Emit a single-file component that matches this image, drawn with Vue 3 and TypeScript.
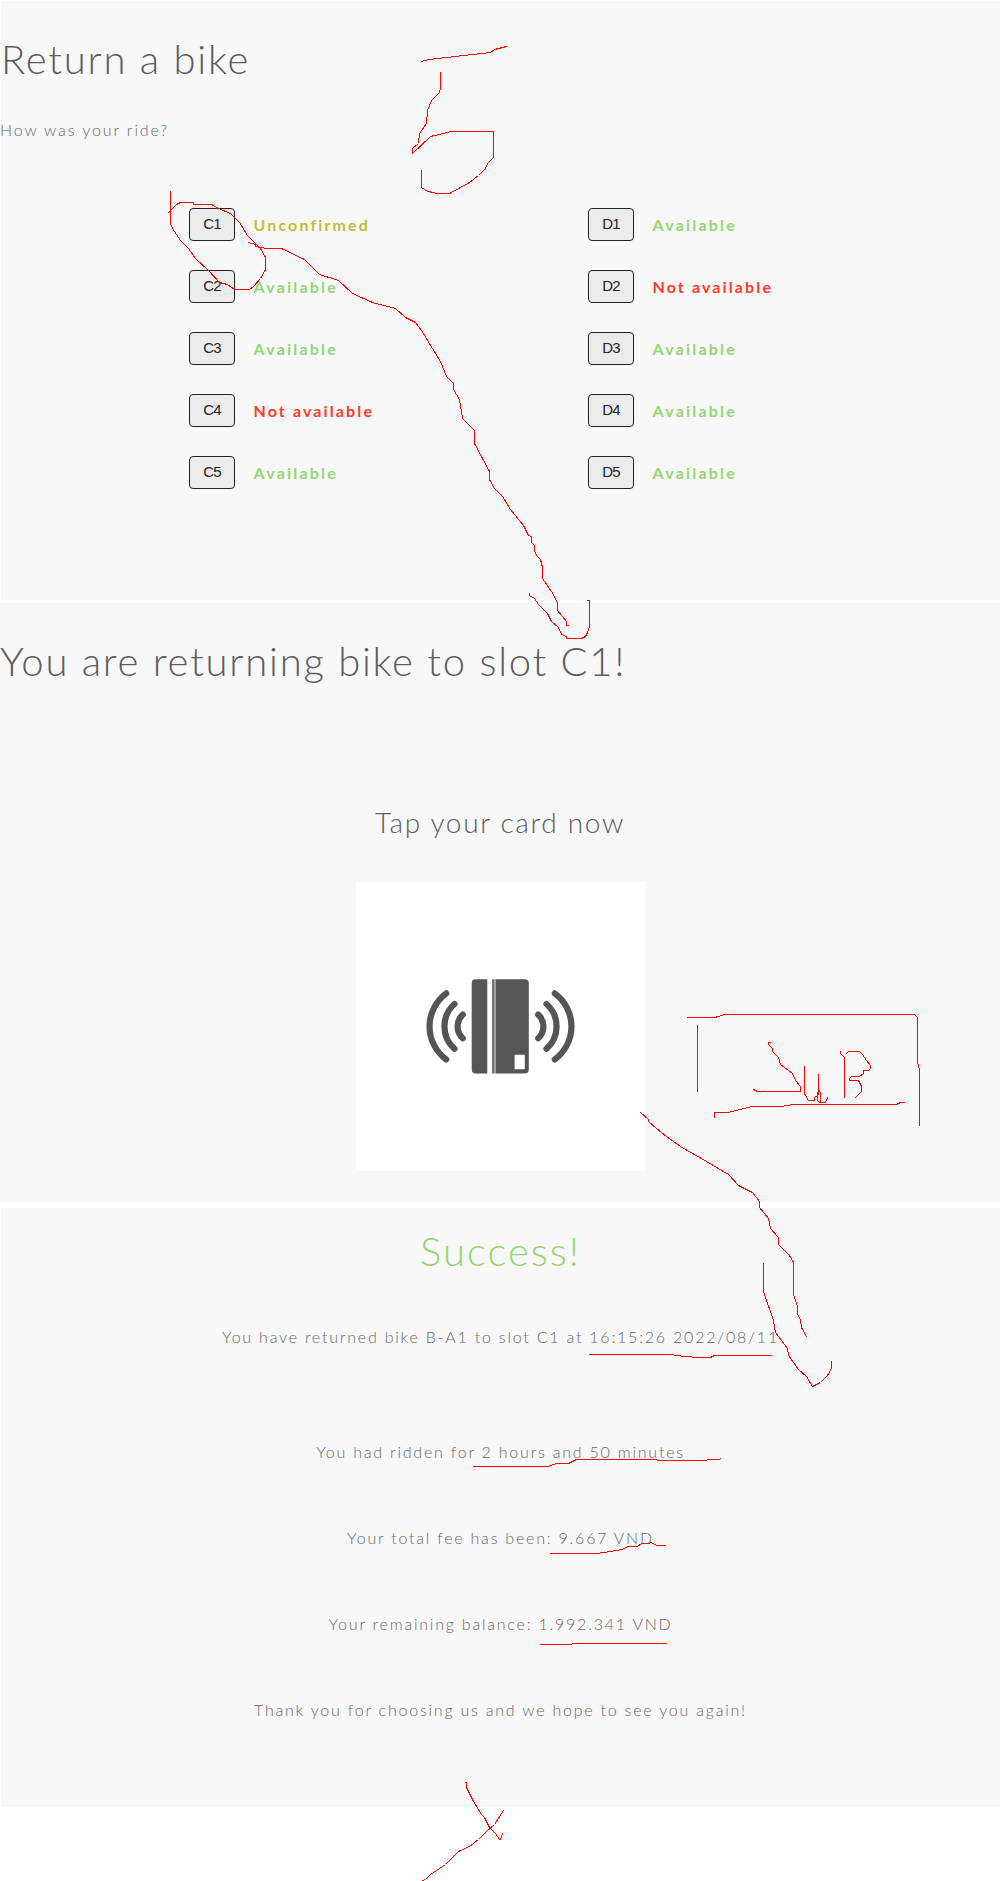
<script setup lang="ts">
type Status = 'Available' | 'Not available' | 'Unconfirmed'

interface Slot {
  id: string
  status: Status
}

const columns: Slot[][] = [
  [
    { id: 'C1', status: 'Unconfirmed' },
    { id: 'C2', status: 'Available' },
    { id: 'C3', status: 'Available' },
    { id: 'C4', status: 'Not available' },
    { id: 'C5', status: 'Available' },
  ],
  [
    { id: 'D1', status: 'Available' },
    { id: 'D2', status: 'Not available' },
    { id: 'D3', status: 'Available' },
    { id: 'D4', status: 'Available' },
    { id: 'D5', status: 'Available' },
  ],
]

const statusClass: Record<Status, string> = {
  Available: 'available',
  'Not available': 'unavailable',
  Unconfirmed: 'unconfirmed',
}

const receipt: string[] = [
  'You have returned bike B-A1 to slot C1 at 16:15:26 2022/08/11',
  'You had ridden for 2 hours and 50 minutes',
  'Your total fee has been: 9.667 VND',
  'Your remaining balance: 1.992.341 VND',
  'Thank you for choosing us and we hope to see you again!',
]

// Freehand pen strokes laid over the three screens
const strokes: string[] = [
  // step number
  '421,61 428,59 490,52 494,49 506,46',
  '440,72 440,87 439,92 431,100 427,110 426,123 419,133 418,143 412,148 412,153 430,136 451,131 493,131 493,157 487,163 485,168 478,175 469,182 449,193 436,193 433,192 427,191 421,187 421,170',
  // ring round the first slot
  '170,191 170,223 172,228 180,240 188,248 195,258 208,270 219,282 227,284 234,289 249,289 253,286 260,278 265,269 265,257 260,248 247,235 239,222 230,213 218,208 211,204 193,204 193,202 180,202 176,204 168,212',
  // arrow to the second screen
  '248,242 255,244 255,246 266,248 281,248 304,259 319,274 338,280 352,293 372,302 395,308 405,317 415,322 421,330 440,361 446,376 453,383 453,389 459,399 462,418 474,430 474,443 489,471 489,479 494,488 502,496 510,509 523,525 528,535 531,536 531,542 534,545 534,550 536,555 540,559 542,567 542,578 553,594 557,603 557,610 566,621 566,625 568,625',
  '529,593 529,595 534,598 538,604 547,613 551,621 558,627 561,634 566,636 566,638 581,638 585,636 587,632 589,626 589,600 587,600',
  // submit box
  '687,1017 714,1017 718,1016 724,1014 914,1014 917,1017 917,1062 919,1069 919,1125',
  '697,1025 697,1091',
  '714,1117 714,1112 728,1112 735,1110 752,1106 781,1106 792,1104 896,1104 900,1102 904,1102',
  '770,1042 768,1042 768,1044 772,1048 772,1051 778,1057 780,1064 792,1073 795,1080 800,1086 800,1091 757,1091 753,1089',
  '804,1066 804,1093 808,1100 814,1100 814,1097 817,1095 818,1089 818,1074',
  '818,1089 817,1100 819,1102 825,1102 827,1097',
  '818,1089 820,1092 820,1101',
  '840,1051 840,1053 844,1057 844,1097',
  '846,1053 848,1051 859,1051 862,1054 866,1060 870,1065 870,1068 868,1070 863,1070 863,1073 859,1076 851,1076 849,1078 849,1080 858,1080 861,1086 861,1091 855,1097',
  // arrow to the third screen
  '640,1112 648,1119 648,1121 656,1128 666,1136 680,1146 706,1161 728,1174 738,1185 752,1192 759,1201 759,1207 768,1218 770,1228 778,1237 778,1244 789,1255 793,1262 793,1294 797,1306 797,1314 800,1319 801,1327 806,1336',
  '763,1263 763,1291 773,1320 775,1332 787,1348 788,1355 798,1369 806,1376 812,1386 820,1382 827,1375 831,1368 831,1361',
  // underlines
  '589,1354 670,1354 684,1356 699,1357 710,1357 714,1355 771,1355',
  '473,1466 547,1466 556,1463 568,1463 576,1459 656,1459 657,1460 706,1460 707,1459 719,1459 720,1458',
  '550,1553 596,1553 604,1552 621,1549 628,1546 637,1546 641,1543 648,1543 651,1542 656,1545 665,1545',
  '540,1644 571,1644 572,1643 666,1643',
  // closing arrow
  '465,1782 466,1782 466,1787 473,1801 481,1814 484,1817 489,1827 495,1833 499,1839 500,1839 502,1833',
  '503,1810 494,1824 486,1831 478,1839 469,1846 458,1851 445,1864 430,1874 425,1879 422,1880',
]
</script>

<template>
  <main class="board">
    <section class="screen screen-return">
      <h1>Return a bike</h1>
      <p class="question">How was your ride?</p>
      <div class="slots">
        <ul v-for="(column, i) in columns" :key="i" class="column">
          <li v-for="slot in column" :key="slot.id" class="slot">
            <button type="button">{{ slot.id }}</button>
            <span class="status" :class="statusClass[slot.status]">{{ slot.status }}</span>
          </li>
        </ul>
      </div>
    </section>

    <section class="screen screen-tap">
      <h1>You are returning bike to slot C1!</h1>
      <h2>Tap your card now</h2>
      <svg class="card" viewBox="0 0 289 289" width="289" height="289">
        <rect width="289" height="289" fill="#fff" />
        <g fill="#555">
          <path d="M119.7 97.3h11.6v94.2h-11.6a4 4 0 0 1-4-4v-86.2a4 4 0 0 1 4-4z" />
          <rect x="136.2" y="97.3" width="1.7" height="94.2" />
          <path
            fill-rule="evenodd"
            d="M139.4 97.3h29.4a4 4 0 0 1 4 4v86.2a4 4 0 0 1-4 4h-29.4zM158.6 172.8v14.4h10.2v-14.4z"
          />
        </g>
        <rect x="137.9" y="97.3" width="1.5" height="94.2" fill="#aaa" />
        <g fill="none" stroke="#555" stroke-width="6.2" stroke-linecap="round">
          <path d="M90.2 111.4a41 41 0 0 0 0 66" />
          <path d="M98.5 122a30 30 0 0 0 0 44.8" />
          <path d="M106.8 132.6a16 16 0 0 0 0 23.6" />
          <path d="M198.8 111.4a41 41 0 0 1 0 66" />
          <path d="M190.5 122a30 30 0 0 1 0 44.8" />
          <path d="M182.2 132.6a16 16 0 0 1 0 23.6" />
        </g>
      </svg>
    </section>

    <section class="screen screen-success">
      <h1>Success!</h1>
      <p v-for="line in receipt" :key="line">{{ line }}</p>
    </section>

    <svg class="ink" viewBox="0 0 1000 1881" width="1000" height="1881">
      <g transform="translate(0.5 0.5)">
        <polyline v-for="(points, i) in strokes" :key="i" :points="points" />
      </g>
    </svg>
  </main>
</template>

<style>
body {
  margin: 0;
  background: #fff;
}
</style>

<style scoped>
.board {
  position: relative;
  box-sizing: border-box;
  width: 1000px;
  height: 1881px;
  padding-top: 1px;
  overflow: hidden;
  font-family: Lato, sans-serif;
  font-weight: 300;
  color: #5c5c5c;
}

.screen {
  box-sizing: border-box;
  height: 599px;
  background: #f8f8f8;
}

.screen-return {
  margin-left: 1px;
  padding-top: 34px;
}

.screen-tap {
  display: flex;
  flex-direction: column;
  margin-top: 3px;
  padding-top: 34px;
}

.screen-success {
  margin: 6px 0 0 1px;
  padding-top: 19px;
  text-align: center;
}

h1,
h2,
p,
ul {
  margin: 0;
  padding: 0;
  font-weight: 300;
}

h1 {
  font-size: 40px;
  line-height: 48px;
  letter-spacing: 1.75px;
}

h2 {
  margin-top: 120px;
  font-size: 28px;
  line-height: 34px;
  letter-spacing: 1.67px;
  text-align: center;
}

p {
  font-size: 16px;
  line-height: 24px;
  letter-spacing: 1.78px;
  color: #666;
}

.question {
  margin: 35px 0 0 -1px;
  letter-spacing: 1.88px;
}

.slots {
  display: flex;
  margin: 66px 0 0 188px;
}

.column {
  width: 399px;
  list-style: none;
}

.slot {
  display: flex;
  align-items: center;
  height: 33px;
  margin-bottom: 29px;
}

button {
  box-sizing: border-box;
  width: 46px;
  height: 33px;
  margin-right: 18.5px;
  padding: 0 0 2px;
  border: 1px solid #222;
  border-radius: 4px;
  background: #ebebeb;
  color: #222;
  font: 400 15px 'Liberation Sans', Arial, sans-serif;
  letter-spacing: -0.8px;
}

.status {
  font-size: 16px;
  font-weight: 700;
  line-height: 24px;
  letter-spacing: 2.12px;
}

.available {
  color: #93d672;
  letter-spacing: 2.22px;
}

.unavailable {
  color: #ff3b26;
}

.unconfirmed {
  color: #c6bb35;
}

.card {
  display: block;
  margin: 43px 0 0 356px;
}

.screen-success h1 {
  color: #93d672;
  letter-spacing: 2px;
}

.screen-success p {
  margin-top: 62px;
}

.screen-success h1 + p {
  margin: 50px 0 91px;
}

.screen-success h1 + p + p {
  margin-top: 0;
}

.ink {
  position: absolute;
  top: 0;
  left: 0;
  pointer-events: none;
}

.ink polyline {
  fill: none;
  stroke: #f00;
  stroke-width: 1;
  stroke-linecap: square;
  shape-rendering: crispEdges;
}
</style>
